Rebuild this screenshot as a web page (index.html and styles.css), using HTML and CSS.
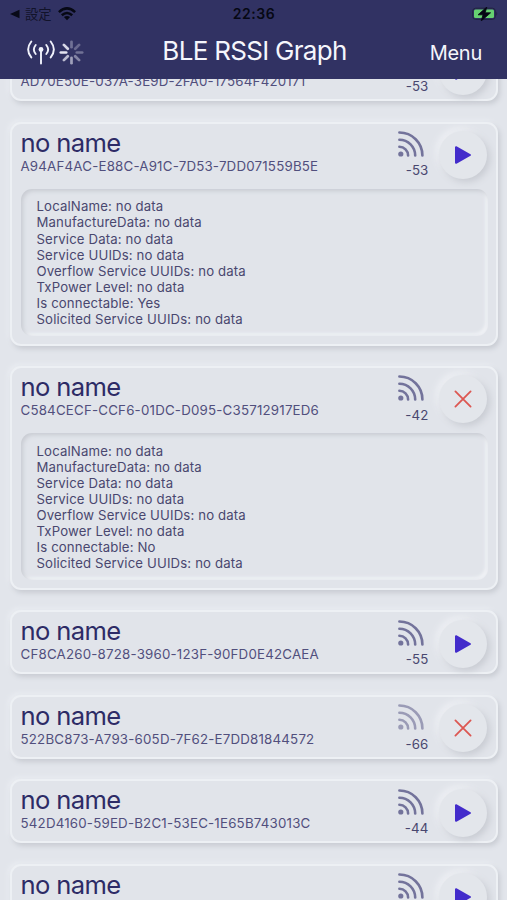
FILE: index.html
```html
<!DOCTYPE html>
<html lang="en">
<head>
<meta charset="utf-8">
<title>BLE RSSI Graph</title>
<link rel="stylesheet" href="styles.css">
</head>
<body>
<svg class="sprite" aria-hidden="true">
  <symbol id="rss" viewBox="0 0 26 26">
    <circle cx="2.8" cy="23" r="2.6" fill="currentColor"/>
    <g fill="none" stroke="currentColor" stroke-width="2.6" stroke-linecap="round">
      <path d="M1.4 15.8A8.7 8.7 0 0 1 10.1 24.5"/>
      <path d="M1.4 8.7A15.8 15.8 0 0 1 17.2 24.5"/>
      <path d="M1.4 1.5A23 23 0 0 1 24.4 24.5"/>
    </g>
  </symbol>
  <symbol id="play" viewBox="0 0 18 20">
    <path d="M2 2.2V17.8L16 10Z" fill="#432ccb" stroke="#432ccb" stroke-width="2" stroke-linejoin="round"/>
  </symbol>
  <symbol id="close" viewBox="0 0 18 18">
    <path d="M1.4 1.4L16.6 16.6M16.6 1.4L1.4 16.6" stroke="#dc5752" stroke-width="1.8" stroke-linecap="round"/>
  </symbol>
</svg>
<header class="header">
  <div class="status">
    <div class="status-left">
      <svg width="10" height="10" viewBox="0 0 10 10"><path d="M0 5L9.5 .8V9.2Z" fill="#080a18"/></svg>
      <span class="back">設定</span>
      <svg class="wifi" width="18" height="14" viewBox="0 0 18 14"><g fill="none" stroke="#060814" stroke-width="2.5"><path d="M.9 5.1Q9-2.4 17.1 5.1"/><path d="M3.8 8.3Q9 3.6 14.2 8.3"/></g><path d="M5.9 10.1Q9 7.7 12.1 10.1L9 13.3Z" fill="#060814"/></svg>
    </div>
    <span class="clock">22:36</span>
    <svg class="battery" width="26" height="14" viewBox="0 0 26 14"><rect x=".7" y="1.2" width="22.6" height="11.2" rx="3" fill="none" stroke="#20233f" stroke-width="1"/><rect x="2" y="2.5" width="20" height="8.6" rx="1.5" fill="#66d171"/><path d="M24.3 4.8Q26.2 6.8 24.3 8.8Z" fill="#20233f"/><path d="M14.8 0L6 7.8H11L9.2 14L18.6 5.8H13.2Z" fill="#060814" stroke="#060814" stroke-width=".8"/></svg>
  </div>
  <div class="nav">
    <div class="nav-left">
      <svg width="28" height="25" viewBox="0 0 28 25"><g fill="none" stroke="#f0f2fb" stroke-width="1.9" stroke-linecap="round"><path d="M4.3 1.5Q-2 9.6 4.3 17.4M23.7 1.5Q30 9.6 23.7 17.4M8.7 5Q5 9.6 8.7 14M19.3 5Q23 9.6 19.3 14M14 10V23.5"/></g><circle cx="14" cy="9.5" r="2.4" fill="#f0f2fb"/></svg>
      <svg width="25" height="25" viewBox="-12.5 -12.5 25 25"><g stroke="#e9e9f5" stroke-width="2.7" stroke-linecap="round"><path d="M-5.3 0H-10.7" opacity=".98"/><path d="M-3.7-3.7L-7.6-7.6" opacity=".9"/><path d="M0-5.3V-10.7" opacity=".35"/><path d="M3.7-3.7L7.6-7.6" opacity=".3"/><path d="M5.3 0H10.7" opacity=".35"/><path d="M3.7 3.7L7.6 7.6" opacity=".45"/><path d="M0 5.3V10.7" opacity=".6"/><path d="M-3.7 3.7L-7.6 7.6" opacity=".75"/></g></svg>
    </div>
    <h1 class="title">BLE RSSI Graph</h1>
    <span class="menu">Menu</span>
  </div>
</header>
<main class="viewport">
  <div class="list">
    <article class="card">
      <div class="row"><div class="info"><h2 class="name">no name</h2><p class="uuid">AD70E50E-037A-3E9D-2FA0-17564F420171</p></div>
      <div class="signal"><svg class="rss"><use href="#rss"/></svg><span class="rssi">-53</span></div><div class="button"><svg class="play"><use href="#play"/></svg></div></div>
    </article>
    <article class="card">
      <div class="row"><div class="info"><h2 class="name">no name</h2><p class="uuid">A94AF4AC-E88C-A91C-7D53-7DD071559B5E</p></div>
      <div class="signal"><svg class="rss"><use href="#rss"/></svg><span class="rssi">-53</span></div><div class="button"><svg class="play"><use href="#play"/></svg></div></div>
      <ul class="details"><li>LocalName: no data</li><li>ManufactureData: no data</li><li>Service Data: no data</li><li>Service UUIDs: no data</li><li>Overflow Service UUIDs: no data</li><li>TxPower Level: no data</li><li>Is connectable: Yes</li><li>Solicited Service UUIDs: no data</li></ul>
    </article>
    <article class="card">
      <div class="row"><div class="info"><h2 class="name">no name</h2><p class="uuid">C584CECF-CCF6-01DC-D095-C35712917ED6</p></div>
      <div class="signal"><svg class="rss"><use href="#rss"/></svg><span class="rssi">-42</span></div><div class="button"><svg class="close"><use href="#close"/></svg></div></div>
      <ul class="details"><li>LocalName: no data</li><li>ManufactureData: no data</li><li>Service Data: no data</li><li>Service UUIDs: no data</li><li>Overflow Service UUIDs: no data</li><li>TxPower Level: no data</li><li>Is connectable: No</li><li>Solicited Service UUIDs: no data</li></ul>
    </article>
    <article class="card">
      <div class="row"><div class="info"><h2 class="name">no name</h2><p class="uuid">CF8CA260-8728-3960-123F-90FD0E42CAEA</p></div>
      <div class="signal"><svg class="rss"><use href="#rss"/></svg><span class="rssi">-55</span></div><div class="button"><svg class="play"><use href="#play"/></svg></div></div>
    </article>
    <article class="card">
      <div class="row"><div class="info"><h2 class="name">no name</h2><p class="uuid">522BC873-A793-605D-7F62-E7DD81844572</p></div>
      <div class="signal"><svg class="rss weak"><use href="#rss"/></svg><span class="rssi">-66</span></div><div class="button"><svg class="close"><use href="#close"/></svg></div></div>
    </article>
    <article class="card">
      <div class="row"><div class="info"><h2 class="name">no name</h2><p class="uuid">542D4160-59ED-B2C1-53EC-1E65B743013C</p></div>
      <div class="signal"><svg class="rss"><use href="#rss"/></svg><span class="rssi">-44</span></div><div class="button"><svg class="play"><use href="#play"/></svg></div></div>
    </article>
    <article class="card">
      <div class="row"><div class="info"><h2 class="name">no name</h2></div>
      <div class="signal"><svg class="rss"><use href="#rss"/></svg></div><div class="button"><svg class="play"><use href="#play"/></svg></div></div>
    </article>
  </div>
</main>
</body>
</html>
```
FILE: styles.css
```css
* { box-sizing: border-box; margin: 0; padding: 0; }
body {
  display: flex;
  flex-direction: column;
  height: 900px;
  overflow: hidden;
  background: #e2e5eb;
  color: #302f66;
  font-family: Inter, "Noto Sans CJK JP", sans-serif;
}
svg { display: block; flex: none; }
.sprite { position: absolute; width: 0; height: 0; }
.header { flex: none; height: 79px; background: #313263; }
.status {
  display: grid;
  grid-template-columns: 1fr auto 1fr;
  align-items: center;
  height: 27px;
  padding: 0 9px 0 10px;
}
.status-left { display: flex; align-items: center; }
.back { margin-left: 5px; font-size: 13.3px; line-height: 20px; color: #11132a; }
.wifi { margin-left: 6px; }
.clock { font-size: 14px; font-weight: 600; letter-spacing: .5px; color: #060814; }
.battery { justify-self: end; }
.nav {
  display: grid;
  grid-template-columns: 1fr auto 1fr;
  align-items: center;
  height: 48px;
  padding: 0 25px 0 27px;
  color: #f5f6fc;
}
.nav-left { display: flex; align-items: center; gap: 4px; padding-top: 2px; }
.title { font-size: 26px; font-weight: 400; letter-spacing: -.7px; line-height: 32px; }
.menu { justify-self: end; padding-top: 4px; font-size: 20px; letter-spacing: -.25px; line-height: 24px; }
.viewport { flex: 1; min-height: 0; overflow: hidden; }
.list {
  display: flex;
  flex-direction: column;
  gap: 20.4px;
  margin-top: -41.8px;
  padding: 0 9.5px 0 10px;
}
.card {
  flex: none;
  height: 64px;
  border: 2px solid #edf0f4;
  border-radius: 11px;
  background: #e1e4ea;
  box-shadow: 2px 3px 5px #c9ccd3, -2px -2px 5px #eaedf2;
}
.card:has(.details) { height: 224px; }
.row { display: flex; height: 62px; padding: 0 8.5px 0 8.5px; }
.info { flex: 1; }
.name { margin-top: 3px; font-size: 25.6px; font-weight: 400; letter-spacing: -.65px; line-height: 31px; color: #2d2b66; }
.uuid { font-size: 13.3px; letter-spacing: .2px; line-height: 16px; color: #514f7d; white-space: nowrap; }
.signal { display: flex; flex-direction: column; align-items: flex-end; width: 40px; padding-top: 7.5px; margin-right: 10.5px; }
.rss { width: 26px; height: 26px; margin-right: 4.5px; color: #73739b; }
.weak { color: #9a9bb6; }
.rssi { margin-top: 5.3px; font-size: 13.3px; letter-spacing: .15px; line-height: 16px; color: #49476f; }
.button {
  display: flex;
  align-items: center;
  justify-content: center;
  width: 48px;
  height: 48px;
  margin-top: 7.4px;
  border-radius: 50%;
  background: #e3e6eb;
  box-shadow: 3px 3px 7px #c8cbd2, -3px -3px 7px #eff1f5;
}
.play { width: 18px; height: 20px; }
.close { width: 18px; height: 18px; }
.details {
  height: 147px;
  margin: 3px 8px 0 8.5px;
  padding: 9.8px 16px;
  border-radius: 11px;
  box-shadow: inset 2px 2px 4px #c8cbd2, inset -3px -3px 3px #eff1f5;
  list-style: none;
  font-size: 13.2px;
  letter-spacing: .14px;
  line-height: 16.07px;
  color: #49476f;
}
```
